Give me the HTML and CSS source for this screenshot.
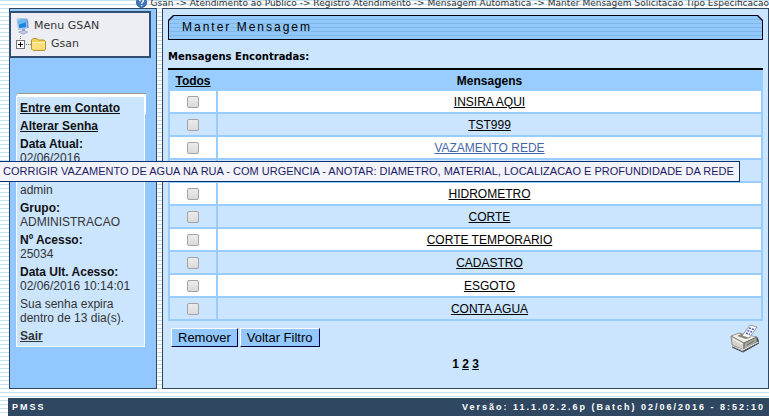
FILE: index.html
```
<!DOCTYPE html>
<html lang="pt-BR">
<head>
  <meta charset="UTF-8">
  <meta name="viewport" content="width=device-width, initial-scale=1.0">
  <title>Manter Mensagem</title>
  <link rel="stylesheet" href="styles.css">
</head>
<body>
  <header class="breadcrumb">
    <svg class="help-icon" viewBox="0 0 11 11" aria-hidden="true">
      <circle cx="5.5" cy="5.5" r="5" fill="#3f78bd" stroke="#285a98"/>
      <path d="M3.7 4.2C3.8 1.7 7.4 1.8 7.3 4.1C7.2 5.3 5.6 5.2 5.6 6.7M5.6 8V9.2" fill="none" stroke="#fff" stroke-width="1.3"/>
    </svg>
    <span>Gsan -&gt; Atendimento ao Publico -&gt; Registro Atendimento -&gt; Mensagem Automatica -&gt; Manter Mensagem Solicitacao Tipo Especificacao</span>
  </header>

  <div class="page">
    <aside class="sidebar">
      <nav class="menu">
        <div class="menu-item">
          <svg class="icon-computer" viewBox="0 0 13 17" aria-hidden="true">
            <path d="M1 1L10 0L11.500 10L2.500 11.500Z" fill="#cfe2f6" stroke="#8fb0d8" stroke-width=".7"/>
            <path d="M2 2L9.300 1L10.500 9.300L3.200 10.300Z" fill="#1f86e0"/>
            <path d="M2 2L9.300 1L9.600 4.500L2.700 6.500Z" fill="#6dbcf6"/>
            <path d="M10 .3L12 2L12.700 10L11.300 10Z" fill="#6d97d0"/>
            <path d="M6 11H9V13H6Z" fill="#8aa4cc"/>
            <path d="M2.500 14L8 12.300L12 14L7 16.300Z" fill="#bccbe4" stroke="#8d9fc4" stroke-width=".7"/>
          </svg>
          <span>Menu GSAN</span>
        </div>
        <div class="menu-item">
          <svg class="icon-node" viewBox="0 0 15 16" aria-hidden="true">
            <path d="M4.5 0V3" stroke="#777" stroke-dasharray="1 1"/>
            <rect x=".5" y="4.5" width="8" height="8" fill="#fff" stroke="#777"/>
            <path d="M2 8.5H7M4.5 6V11" stroke="#000"/>
            <path d="M10 8.5H15" stroke="#777" stroke-dasharray="1 1"/>
          </svg>
          <svg class="icon-folder" viewBox="0 0 15 13" aria-hidden="true">
            <path d="M.5 11V2L2 .5H6L7.5 2H13L14.5 3.5V11L13.5 12.5H2Z" fill="#f2cf56" stroke="#b49332"/>
            <path d="M1 4H14V10L13 11.5H2L1 10Z" fill="#f9df7d"/>
            <path d="M1.5 4.5H14" stroke="#fff3b5"/>
          </svg>
          <a href="#">Gsan</a>
        </div>
      </nav>

      <div class="user-box">
        <p><a href="#">Entre em Contato</a></p>
        <p><a href="#">Alterar Senha</a></p>
        <p><b>Data Atual:</b><br>02/06/2016</p>
        <p>&nbsp;<br>admin</p>
        <p><b>Grupo:</b><br>ADMINISTRACAO</p>
        <p><b>Nº Acesso:</b><br>25034</p>
        <p><b>Data Ult. Acesso:</b><br>02/06/2016 10:14:01</p>
        <p>Sua senha expira<br>dentro de 13 dia(s).</p>
        <p><a class="logout" href="#">Sair</a></p>
      </div>
    </aside>

    <main class="content">
      <div class="title-bar"><h1>Manter Mensagem</h1></div>
      <h2>Mensagens Encontradas:</h2>
      <table class="messages">
        <thead>
          <tr><th class="check"><a href="#">Todos</a></th><th>Mensagens</th></tr>
        </thead>
        <tbody>
          <tr><td><input type="checkbox" aria-label="INSIRA AQUI"></td><td><a href="#">INSIRA AQUI</a></td></tr>
          <tr><td><input type="checkbox" aria-label="TST999"></td><td><a href="#">TST999</a></td></tr>
          <tr><td><input type="checkbox" aria-label="VAZAMENTO REDE"></td><td><a class="active" href="#" aria-describedby="tip">VAZAMENTO REDE</a></td></tr>
          <tr><td></td><td></td></tr>
          <tr><td><input type="checkbox" aria-label="HIDROMETRO"></td><td><a href="#">HIDROMETRO</a></td></tr>
          <tr><td><input type="checkbox" aria-label="CORTE"></td><td><a href="#">CORTE</a></td></tr>
          <tr><td><input type="checkbox" aria-label="CORTE TEMPORARIO"></td><td><a href="#">CORTE TEMPORARIO</a></td></tr>
          <tr><td><input type="checkbox" aria-label="CADASTRO"></td><td><a href="#">CADASTRO</a></td></tr>
          <tr><td><input type="checkbox" aria-label="ESGOTO"></td><td><a href="#">ESGOTO</a></td></tr>
          <tr><td><input type="checkbox" aria-label="CONTA AGUA"></td><td><a href="#">CONTA AGUA</a></td></tr>
        </tbody>
      </table>
      <div class="actions">
        <button type="button">Remover</button>
        <button type="button">Voltar Filtro</button>
        <a class="print" href="#" aria-label="Imprimir">
          <svg viewBox="0 0 30 29">
            <path d="M1 13L9 9L28 14L29 18L14 27L3 23Z" fill="#444"/>
            <path d="M1 12L9 9L27 13L14 19Z" fill="#efede5" stroke="#777" stroke-width=".7"/>
            <path d="M1 12L14 19V26L2 21Z" fill="#d5d2ca" stroke="#777" stroke-width=".7"/>
            <path d="M14 19L27 13V18L14 26Z" fill="#aaa79f" stroke="#555" stroke-width=".7"/>
            <path d="M2 22L13 26L28 18" fill="none" stroke="#eee"/>
            <path d="M2 23L13 28L29 19" fill="none" stroke="#333"/>
            <path d="M7 12L11 10L21 13L16 15Z" fill="#8b8874"/>
            <path d="M12 12L20 1L27 3L19 14Z" fill="#fff" stroke="#777" stroke-width=".7"/>
            <path d="M19 4L24 5.500M17.500 6.500L22 8M16 9L20 10.500" stroke="#465bc4" stroke-width="1.500" stroke-dasharray="2 1"/>
            <path d="M3 15L12 20" stroke="#fff"/>
            <path d="M17 21L24 17" stroke="#666"/>
          </svg>
        </a>
      </div>
      <div class="pages">1 <a href="#">2</a> <a href="#">3</a></div>
    </main>
  </div>

  <footer class="footer">
    <span>PMSS</span>
    <span>Versão: 11.1.02.2.6p (Batch) 02/06/2016 - 8:52:10</span>
  </footer>

  <div class="tooltip" id="tip" role="tooltip">CORRIGIR VAZAMENTO DE AGUA NA RUA - COM URGENCIA - ANOTAR: DIAMETRO, MATERIAL, LOCALIZACAO E PROFUNDIDADE DA REDE</div>
</body>
</html>
```

FILE: styles.css
```
* {
  box-sizing: border-box;
}

body {
  margin: 0;
  font-family: "Liberation Sans", Arial, sans-serif;
  font-size: 12px;
  line-height: 14px;
  color: #000;
  background: repeating-linear-gradient(#c3dff0 0, #c3dff0 1px, #fff 1px, #fff 4px);
}

a {
  color: inherit;
}

/* only the bottom of the path line is visible */
.breadcrumb {
  display: flex;
  align-items: flex-end;
  justify-content: flex-end;
  gap: 3px;
  height: 8px;
  overflow: hidden;
  white-space: nowrap;
  font-family: "DejaVu Sans", Verdana, sans-serif;
  font-size: 9px;
  line-height: 10px;
  color: #333;
}

.help-icon {
  flex: none;
  width: 11px;
  height: 11px;
}

.page {
  display: flex;
  gap: 5px;
  padding: 0 0 0 9px;
}

.sidebar {
  flex: none;
  width: 148px;
  padding-bottom: 41px;
  background: #92c8ff;
  border: 1px solid #2f4760;
}

.menu {
  margin: 2px 5px 0 -1px;
  padding: 4px 5px 3px;
  background: #eceef4;
  border: 2px solid #31506f;
  font-family: "DejaVu Sans", Verdana, sans-serif;
  font-size: 11px;
  color: #333;
}

.menu-item {
  display: flex;
  align-items: center;
  height: 18px;
}

.menu-item a {
  margin-left: 5px;
  text-decoration: none;
}

.icon-computer {
  width: 13px;
  height: 17px;
  margin-right: 5px;
}

.icon-node {
  width: 15px;
  height: 16px;
}

.icon-folder {
  width: 15px;
  height: 13px;
}

.user-box {
  position: relative;
  margin: 38px 11px 0 6px;
  padding: 4px 3px 3px;
  background: #cbe5ff;
  border: 1px solid #fff;
  color: #333;
}

/* raised corner behind the box */
.user-box::before {
  content: "";
  position: absolute;
  top: -3px;
  left: 0;
  right: -2px;
  height: 18px;
  border-top: 2px solid #fff;
  border-right: 1px solid #fff;
  box-shadow: 0 -1px 0 #999;
}

.user-box p {
  margin: 0 0 4px;
}

.user-box p:last-child {
  margin-bottom: 0;
}

.user-box a,
.user-box b {
  font-weight: bold;
  color: #111;
}

.user-box .logout {
  color: #333;
}

.content {
  flex: 1;
  min-width: 0;
  padding: 6px 5px;
  background: #cbe5ff;
  border: 1px solid #2f4760;
}

.title-bar,
.title-bar h1 {
  clip-path: polygon(0 5px, 5px 0, calc(100% - 5px) 0, 100% 5px, 100% 100%, 0 100%);
}

.title-bar {
  padding: 1px;
  background: #001;
}

.title-bar h1 {
  margin: 0;
  padding: 0 13px;
  font-size: 12px;
  font-weight: normal;
  line-height: 23px;
  letter-spacing: 2px;
  background: repeating-linear-gradient(#92c8fb 0, #92c8fb 3px, #80b8ea 3px, #80b8ea 4px);
}

.content h2 {
  margin: 10px 0 4px;
  font-family: "DejaVu Sans", Verdana, sans-serif;
  font-size: 10px;
  line-height: 14px;
}

.messages {
  width: 100%;
  border-collapse: separate;
  border-spacing: 2px;
  border-top: 2px solid #000;
  background: #99ccff;
  table-layout: fixed;
  text-align: center;
}

.messages th,
.messages td {
  height: 21px;
  padding: 0;
}

.messages th {
  height: 17px;
}

.messages .check {
  width: 46px;
}

.messages td {
  background: #cbe5ff;
}

.messages tr:nth-child(odd) td {
  background: #fff;
}

.messages .active {
  color: #4565a9;
}

.messages input {
  display: block;
  appearance: none;
  width: 12px;
  height: 12px;
  margin: 0 auto;
  border: 1px solid #a3a3a3;
  border-radius: 2px;
  background: linear-gradient(#ececec, #dadada);
}

.actions {
  display: flex;
  align-items: flex-start;
  gap: 2px;
  padding: 3px 3px 0;
}

.actions button {
  margin-top: 4px;
  padding: 0 6px;
  font-family: inherit;
  font-size: 13px;
  line-height: 17px;
  background: #92c8ff;
  border: 1px solid;
  border-color: #fff #004 #004 #fff;
}

.print {
  margin-left: auto;
}

.print svg {
  display: block;
  width: 30px;
  height: 29px;
}

.pages {
  margin-top: 4px;
  text-align: center;
  font-weight: bold;
}

.footer {
  display: flex;
  justify-content: space-between;
  margin: 9px 0 0 8px;
  padding: 0 4px;
  background: #2f4760;
  color: #fff;
  font-size: 9px;
  font-weight: bold;
  line-height: 18px;
  letter-spacing: 2px;
}

.tooltip {
  position: absolute;
  top: 161px;
  left: -1px;
  padding: 2px 5px 2px 3px;
  background: #f2f4fa;
  border: 1px solid #003070;
  color: #221a66;
  font-size: 11px;
  line-height: 15px;
  white-space: nowrap;
}
```
